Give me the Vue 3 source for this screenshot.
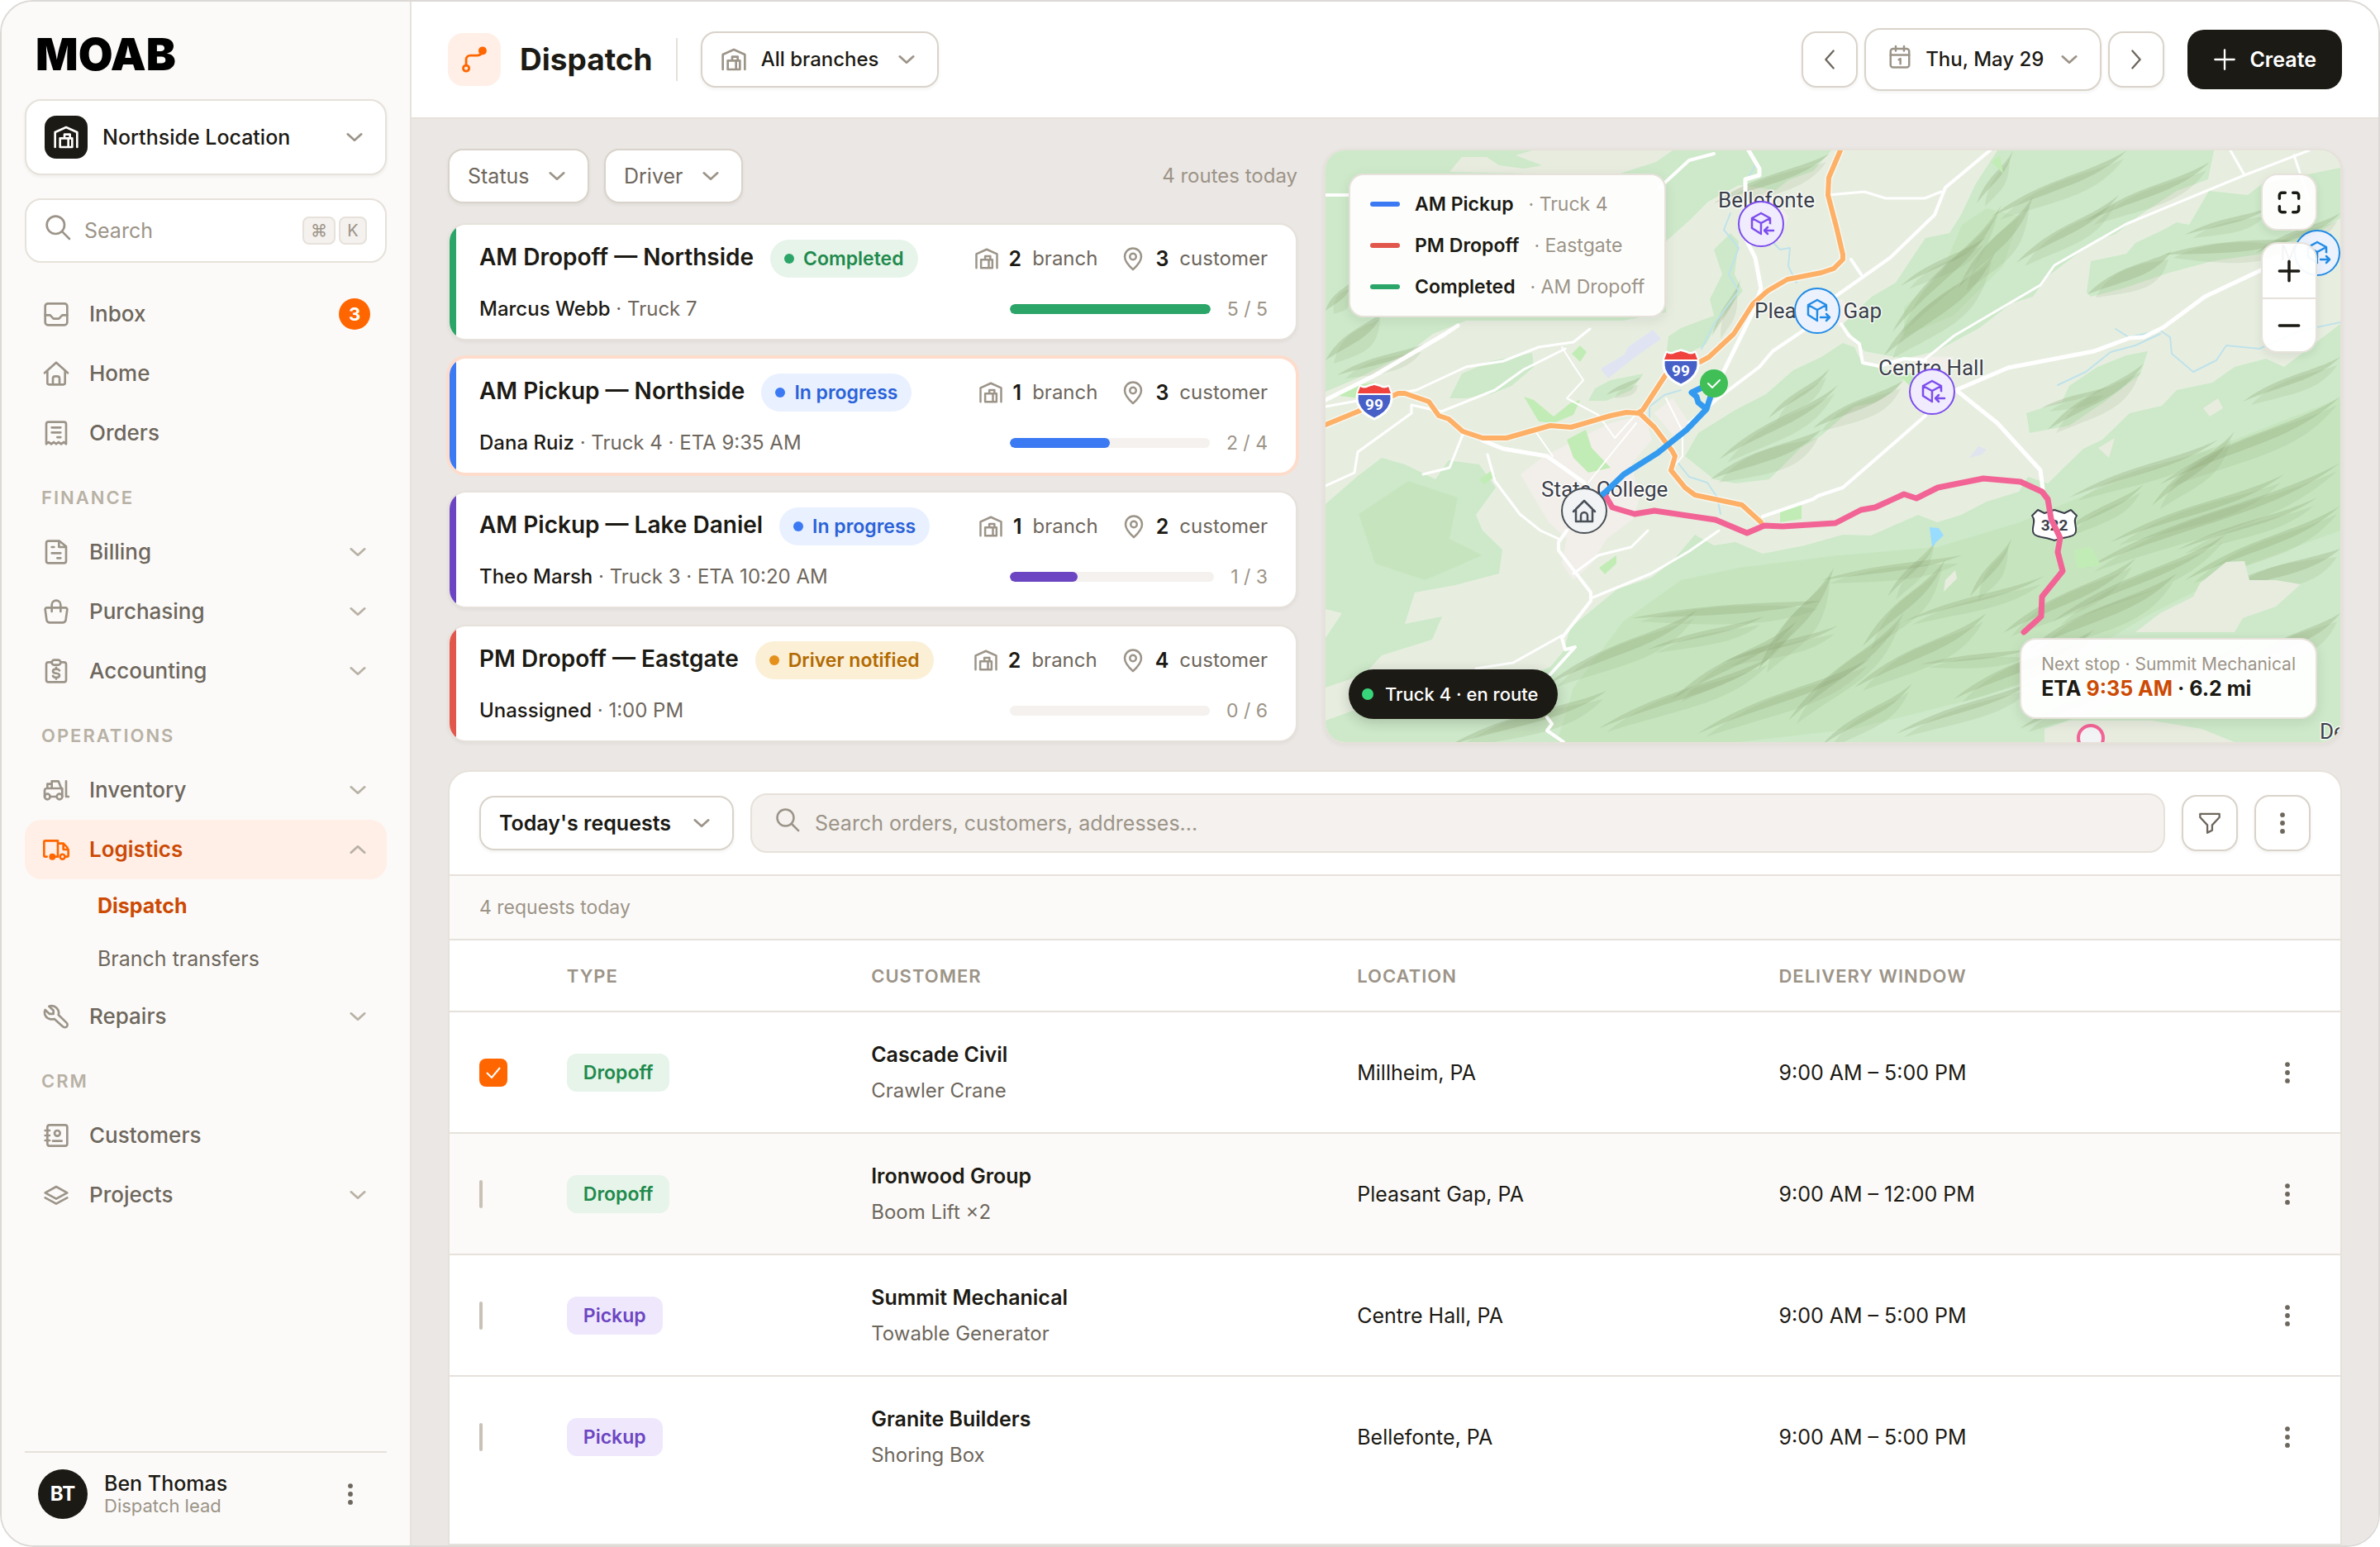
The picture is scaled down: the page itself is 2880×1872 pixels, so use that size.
<script setup>
import { ref } from 'vue'

const icons = {
  inbox: '<rect x="2" y="2.5" width="20" height="19.5" rx="2.5"/><path d="M2 13h4.5l3 3.2h5l3-3.2H22"/>',
  home: '<path d="M1.5 11.5 12 2l10.5 9.5M4 9.8v10.7A1.5 1.5 0 0 0 5.5 22h13a1.5 1.5 0 0 0 1.5-1.5V9.8M9 22v-5.5a2 2 0 0 1 2-2h2a2 2 0 0 1 2 2V22"/>',
  receipt: '<path d="M3 22V4a2 2 0 0 1 2-2h14a2 2 0 0 1 2 2v18l-2.2-1.8-2.300 1.800-2.300-1.800L12 22l-2.200-1.800L7.500 22l-2.300-1.800zM8 7h8M8 11.500h8M13 15.800h3"/>',
  billing: '<path d="M5 2h10l6 5v13a2 2 0 0 1-2 2H5a2 2 0 0 1-2-2V4a2 2 0 0 1 2-2zM14.500 2v5.500H21M8 7.500h2M8 13h8M13 17.500h3"/>',
  bag: '<path d="M3.500 8.500h17a1.500 1.500 0 0 1 1.500 1.700l-1.300 9.300a3 3 0 0 1-3 2.500H6.300a3 3 0 0 1-3-2.500L2 10.200a1.500 1.500 0 0 1 1.500-1.700zM8 12V6a4 4 0 0 1 8 0v6"/>',
  clipboard: '<path d="M8 4H5a2 2 0 0 0-2 2v14a2 2 0 0 0 2 2h14a2 2 0 0 0 2-2V6a2 2 0 0 0-2-2h-3"/><rect x="8" y="2" width="8" height="4.500" rx="2.250"/><path d="M15 11.500c-.5-.9-1.500-1.300-3-1.300-1.700 0-3 .6-3 1.900 0 3.200 6 .8 6 3.900 0 1.200-1.300 1.900-3 1.900-1.500 0-2.500-.5-3-1.400M12 8.900v1.300M12 17.900v1.300"/>',
  forklift: '<circle cx="4" cy="18" r="2.500"/><circle cx="15" cy="18" r="2.500"/><path d="M6.500 18h6M1.500 18v-5.500a2 2 0 0 1 2-2h14V18M4 10.500V6.500h4M8 10.500V4h6l3.500 8.500M21 4v14h3"/>',
  truck: '<path d="M3.500 18.500H2a1 1 0 0 1-1-1V5a1 1 0 0 1 1-1h11.500v14.500H12M13.500 6.500h5L22 10l1 3v4.500a1 1 0 0 1-1 1h-1M18.500 6.500V12H23"/><circle cx="8.500" cy="18.500" r="2" fill="currentColor"/><circle cx="17.700" cy="18.500" r="2.200"/>',
  wrench: '<path d="M5.500 2.800 9.500 6.500v3.200H6L2 6c-1.500 3.500.5 8 5 8.500 1.200.1 2.300 0 3.300-.3l7.700 6.900a2.400 2.400 0 0 0 3.600-3.200L14 10.500c1.500-4.500-3-9.500-8.500-7.700z"/>',
  contacts: '<rect x="4" y="2.500" width="18" height="19" rx="2"/><circle cx="13" cy="10" r="2.500"/><path d="M9 17h8M2 7.500h4M2 12h4M2 16.500h4"/>',
  layers: '<path d="M12 4.500 22 10l-10 5.500L2 10zM2 14.500l10 5.500 10-5.500"/>',
  branch: '<path d="M2 21V7.500L12 3l10 4.500V21M6.500 13h4V9.500h5V13h2v8h-11zM10.500 13h5M14 13v8"/>',
  pin: '<path d="M12 22.500c-5-4.500-8-8.500-8-12.500a8 8 0 0 1 16 0c0 4-3 8-8 12.500z"/><circle cx="12" cy="10" r="3"/>',
  calendar: '<rect x="3" y="4" width="18" height="18" rx="2.500"/><path d="M3 10h18M8 1.500V6M16 1.500V6M11 14.500l1.500-.8V18.500"/>',
  route: '<circle cx="5" cy="19.500" r="2.500"/><circle cx="19" cy="4.500" r="2.500" fill="currentColor"/><path d="M5 17v-5a3.500 3.500 0 0 1 3.500-3.500h6A4.500 4.500 0 0 0 18.500 6"/>',
  search: '<circle cx="10" cy="10" r="8"/><path d="m16 16 6.500 6.500"/>',
  down: '<path d="m3 8 9 8 9-8"/>',
  up: '<path d="m3 16 9-8 9 8"/>',
  left: '<path d="m16 3-8 9 8 9"/>',
  right: '<path d="m8 3 8 9-8 9"/>',
  plus: '<path d="M12 2v20M2 12h20"/>',
  minus: '<path d="M2 12h20"/>',
  filter: '<path d="M2 2.500h20v3.500l-7.500 8v5.500L9.500 22v-8L2 6z"/>',
  expand: '<path d="M2 8V4.500A2.500 2.500 0 0 1 4.500 2H8M16 2h3.500A2.500 2.500 0 0 1 22 4.500V8M22 16v3.500a2.500 2.500 0 0 1-2.500 2.500H16M8 22H4.500A2.500 2.500 0 0 1 2 19.500V16"/>',
  dots: '<g fill="currentColor" stroke="none"><circle cx="12" cy="3.500" r="2.500"/><circle cx="12" cy="12" r="2.500"/><circle cx="12" cy="20.500" r="2.500"/></g>',
}

const groups = [
  { items: [
    { icon: 'inbox', label: 'Inbox', count: 3 },
    { icon: 'home', label: 'Home' },
    { icon: 'receipt', label: 'Orders' },
  ] },
  { title: 'Finance', items: [
    { icon: 'billing', label: 'Billing', more: true },
    { icon: 'bag', label: 'Purchasing', more: true },
    { icon: 'clipboard', label: 'Accounting', more: true },
  ] },
  { title: 'Operations', items: [
    { icon: 'forklift', label: 'Inventory', more: true },
    { icon: 'truck', label: 'Logistics', more: true, open: true, children: ['Dispatch', 'Branch transfers'] },
    { icon: 'wrench', label: 'Repairs', more: true },
  ] },
  { title: 'CRM', items: [
    { icon: 'contacts', label: 'Customers' },
    { icon: 'layers', label: 'Projects', more: true },
  ] },
]

const routes = [
  { name: 'AM Dropoff — Northside', status: 'Completed', tone: 'green', color: '#2ba568', branches: 2, stops: 3, driver: 'Marcus Webb', meta: 'Truck 7', done: 5, total: 5 },
  { name: 'AM Pickup — Northside', status: 'In progress', tone: 'blue', color: '#3b7af2', branches: 1, stops: 3, driver: 'Dana Ruiz', meta: 'Truck 4 · ETA 9:35 AM', done: 2, total: 4, active: true },
  { name: 'AM Pickup — Lake Daniel', status: 'In progress', tone: 'blue', color: '#6c46c2', branches: 1, stops: 2, driver: 'Theo Marsh', meta: 'Truck 3 · ETA 10:20 AM', done: 1, total: 3 },
  { name: 'PM Dropoff — Eastgate', status: 'Driver notified', tone: 'amber', color: '#e2574c', branches: 2, stops: 4, driver: 'Unassigned', meta: '1:00 PM', done: 0, total: 6 },
]

const legend = [
  { name: 'AM Pickup', note: 'Truck 4', color: '#3b7af2' },
  { name: 'PM Dropoff', note: 'Eastgate', color: '#e2574c' },
  { name: 'Completed', note: 'AM Dropoff', color: '#2ba568' },
]

const requests = ref([
  { type: 'Dropoff', customer: 'Cascade Civil', item: 'Crawler Crane', place: 'Millheim, PA', time: '9:00 AM – 5:00 PM', picked: true },
  { type: 'Dropoff', customer: 'Ironwood Group', item: 'Boom Lift ×2', place: 'Pleasant Gap, PA', time: '9:00 AM – 12:00 PM', picked: false },
  { type: 'Pickup', customer: 'Summit Mechanical', item: 'Towable Generator', place: 'Centre Hall, PA', time: '9:00 AM – 5:00 PM', picked: false },
  { type: 'Pickup', customer: 'Granite Builders', item: 'Shoring Box', place: 'Bellefonte, PA', time: '9:00 AM – 5:00 PM', picked: false },
])

const forests = [
  'M0 0H540L505 30 470 55 440 85 412 110V196L360 206H170L130 222 100 245 40 275 0 292Z',
  'M150 300 165 270 200 255 250 245 252 262 225 285 200 295 170 300Z',
  'M318 303 326 288 345 278 385 270 370 290 340 303Z',
  'M411 258 415 225 430 215 470 200 465 180 480 150 470 120 490 100 500 110 495 150 505 170 480 200 460 235 430 250Z',
  'M463 62 480 30 510 0 612 0 590 25 560 36 545 48 500 42Z',
  'M39 394 68 372 96 380 133 398 149 375 186 380 206 408 182 441 190 460 214 483 210 512 157 526 108 535 96 573 141 564 129 592 68 611 47 634 0 650V590L20 560 0 555V428Z',
  'M0 716V690L60 668 150 655 215 649 272 625 288 606 296 578 325 554 353 531 394 517 419 498 447 465 470 478 496 474 529 488 580 478 626 465 660 466 717 441 740 450 769 441 800 425 839 413 850 395 874 403 917 361 940 350 973 318 1012 309 1030 290 1073 281 1100 262 1138 252 1160 262 1228 210V716Z',
  'M435 370 451 342 496 314 533 295 566 266 600 250 626 233 640 238 648 255 700 275 690 290 665 305 640 310 600 345 575 360 537 398 496 403 470 398Z',
  'M661 177 690 160 713 125 726 106 755 100 769 78 787 40 813 0H1075L1068 35 1030 49 986 78 956 101 930 110 873 153 856 177 830 185 791 215 739 243 700 252 652 243 626 210Z',
  'M921 172 926 134 969 125 980 112 1012 97 1030 87 1045 90 1069 49 1116 54 1134 40 1228 21V82L1199 101 1134 125 1073 134 1021 148 965 167 926 177Z',
  'M852 342 848 318 891 304 900 285 934 262 969 248 995 243 986 271 943 304 900 333Z',
  'M0 120 30 140 20 160 30 200 0 230Z',
]
const clearings = [
  'M980 583 1010 560 1050 540 1058 524 1090 498 1112 497 1118 520 1150 520 1180 525 1150 552 1110 566 1100 583Z',
  'M150 26 165 8 195 8 210 18 240 22 262 18 230 6 250 0H420L400 14 350 30Z',
  'M870 700 900 690 1000 690 1060 700 1100 716H870Z',
  'M935 360 955 348 948 372Z', 'M750 520 762 508 764 518 748 534Z', 'M1062 312 1080 300 1086 312 1070 322Z',
]
const deepForest = [
  'M300 650 360 570 430 520 500 505 620 490 740 480 840 450 960 400 1100 350 1228 300V460L1120 500 1000 560 900 620 800 660 640 700 500 716H280Z',
  'M700 190 745 150 770 90 800 70 840 80 820 140 760 200 700 225Z',
  'M40 440 100 400 160 420 150 470 190 490 120 520 60 500Z',
]
const parks = ['M292 350 315 338 322 360 345 384 318 390 300 372Z', 'M331 505 352 490 352 500 338 513Z', 'M298 246 308 236 316 244 308 256Z', 'M550 434 576 428 576 446 550 450Z', 'M906 484 926 480 938 502 910 506Z', 'M806 14 816 6 820 28Z', 'M240 298 252 302 276 322 296 306 308 302 300 320 276 330 258 328Z', 'M186 398 200 388 206 394 192 404Z', 'M10 296 30 286 60 280 40 300Z', 'M696 274 712 268 718 288 706 284Z']
const towns = ['M236 392 262 372 300 352 345 330 385 320 395 350 370 380 380 420 372 446 340 470 322 500 300 520 286 500 292 470 270 450Z', 'M510 60 535 50 560 80 550 110 520 100Z', 'M596 190 625 180 640 200 622 214Z', 'M710 250 760 250 756 275 726 275Z', 'M398 318 420 300 440 330 425 350Z']
const roads = [
  { w: 5, d: 'M0 302 60 272 145 222 160 212' },
  { w: 3, d: 'M0 310 110 290 170 262 215 255 258 238 300 232 320 216' },
  { w: 5, d: 'M190 351 215 361 268 370 313 402' },
  { w: 5, d: 'M512 0 525 22 525 30 508 35V106L520 130 527 167 517 196 480 271' },
  { w: 4, d: 'M590 210 541 243 525 262 476 299 440 330' },
  { w: 4, d: 'M404 45 440 12 470 4' },
  { w: 4, d: 'M618 176 683 130 737 78 750 45 804 0' },
  { w: 3, d: 'M608 54 652 50 678 58 725 58 745 50' },
  { w: 3, d: 'M726 252 761 224 865 163 882 139 969 89 1112 30 1190 0M1095 0 1112 30M1172 6 1190 60' },
  { w: 5, d: 'M1134 144 1064 177 1014 214 990 226 973 227 930 243 826 263 763 290 813 330 865 387 868 410' },
  { w: 4, d: 'M726 321 626 408 596 418 590 422 529 443' },
  { w: 4, d: 'M624 210 633 224 646 234 650 257 670 261 700 252 726 254' },
  { w: 4, d: 'M292 460 282 474V484L321 535V545L286 590 290 604 302 601 272 634M268 686 274 694 268 702 288 716' },
  { w: 3, d: 'M321 542 394 512 440 485 476 460M286 587 227 620 182 627M300 512 330 490 370 480 390 460' },
  { w: 3, d: 'M0 406 35 390 39 365 104 318 104 308 140 316 180 300 205 290 240 265 290 240' },
  { w: 3, d: 'M118 392 150 384 166 344M196 368 205 400 235 440 260 460 282 470' },
  { w: 2, d: 'M286 238 300 260 312 278 292 300 330 320 350 348 375 320M318 402 350 362 376 330' },
  { w: 2, d: 'M254 340 275 370M412 300 432 340V370L424 380' },
  { w: 4, d: 'M0 54H30M636 132 648 150' },
]
const creeks = 'M520 18 508 40M490 76 482 96 500 118 488 150 500 170 470 210 455 240M540 110 550 120 562 118 560 140 570 160M392 330V310L410 296 430 290M420 370 440 395 462 402 474 420 478 440M956 216 972 226 1010 218 1022 226 1024 246 1050 268 1078 254 1090 236 1130 240 1180 218 1228 208M886 284 920 268 950 244 980 236 1010 222'

/* Each ridge is a thin bent lens: start point, end point, thickness. */
const ridgeSeeds = [
  [270, 645, 450, 556, 14], [370, 566, 600, 545, 14], [330, 700, 540, 612, 12], [420, 664, 570, 570, 12], [450, 706, 660, 614, 12],
  [524, 628, 615, 505, 18], [560, 690, 700, 560, 14], [600, 520, 770, 490, 10], [640, 650, 800, 560, 14], [650, 600, 750, 495, 14],
  [690, 706, 860, 640, 10], [760, 664, 930, 580, 14], [700, 570, 870, 515, 8], [820, 584, 980, 494, 14], [780, 540, 830, 470, 10],
  [850, 604, 1030, 512, 16], [880, 570, 1090, 464, 12], [920, 506, 1228, 378, 14], [950, 474, 1160, 392, 12], [1000, 430, 1100, 340, 12],
  [1010, 404, 1228, 298, 14], [1080, 534, 1228, 482, 16], [1040, 520, 1228, 430, 12], [900, 420, 1080, 350, 10], [890, 464, 990, 404, 8],
  [1110, 304, 1228, 250, 10], [950, 664, 1120, 594, 10], [1110, 624, 1228, 560, 14], [150, 720, 340, 654, 14], [600, 720, 710, 645, 10],
  [676, 248, 810, 124, 20], [686, 220, 818, 66, 14], [766, 166, 856, 56, 16], [806, 80, 970, 0, 12], [836, 136, 960, 54, 12],
  [920, 86, 1070, 14, 12], [788, 64, 832, 0, 8], [696, 164, 800, 104, 8], [922, 174, 1024, 122, 16], [1016, 126, 1170, 108, 16],
  [1126, 124, 1228, 76, 10], [1040, 102, 1140, 70, 8], [874, 338, 990, 258, 14], [866, 312, 946, 286, 6], [466, 398, 600, 338, 16],
  [476, 374, 620, 284, 12], [590, 336, 700, 278, 12], [536, 324, 610, 264, 8], [0, 254, 70, 194, 14], [14, 272, 120, 234, 10],
  [470, 64, 610, 4, 12], [468, 224, 502, 156, 8], [0, 194, 32, 158, 10], [340, 296, 382, 274, 6],
  [720, 622, 850, 604, 8], [390, 604, 530, 564, 8], [840, 700, 980, 634, 10], [1030, 484, 1200, 420, 8], [680, 540, 740, 470, 8], [480, 620, 620, 575, 8],
]
const lens = (x1, y1, x2, y2, t) => {
  const ax = x1 + (x2 - x1) * 0.4
  const ay = y1 + (y2 - y1) * 0.5
  const bx = x1 + (x2 - x1) * 0.7
  const by = y1 + (y2 - y1) * 0.55
  return `M${x1} ${y1}C${ax - t / 2} ${ay - t / 2} ${bx} ${by - t / 2} ${x2} ${y2}C${bx + t / 2} ${by + t / 2} ${ax + t / 2} ${ay + t / 2} ${x1} ${y1}Z`
}
const ridges = ridgeSeeds.flatMap(([x1, y1, x2, y2, t]) => [
  { d: lens(x1, y1, x2, y2, t), o: 0.3 },
  { d: lens(x1 + 10, y1 + 4, x2 - 4, y2 + 10, t * 2), o: 0.16 },
])

const highway = 'M0 332 39 316 88 294H96L125 304 137 321 149 325 166 340 190 348H219L272 333 297 335 345 321 364 317 380 318M378 318 384 314 412 271 453 256 464 250 494 222 517 186 535 170 559 156 600 148 615 143 626 132V126L618 92 608 54 609 33 623 0M380 318 398 335 419 363 423 370 418 387 435 408 447 417 504 429 527 450'
const pinkRoute = 'M337 415 347 432 374 440 398 436 472 447 510 463 531 454 553 455 617 451 648 435 665 432 700 416 715 421 741 408 796 397 841 401 867 413 874 422 878 446 889 469 886 486 892 509 867 540 866 564 845 583'
const blueRoute = 'M313 435 337 415 361 392 402 366 437 338 461 313 470 285M461 313 451 305 449 298 443 293 466 282'
const box = 'M0-13 11-7V3M-11-7 0-13M-11-7V5L0 12V-1L-11-7M0-1 11-7'
const pins = [
  { x: 527, y: 89, kind: 'in', color: '#7c4dee', fill: '#f0ebfd' },
  { x: 595, y: 194, kind: 'out', color: '#228be6', fill: '#ebf2fd' },
  { x: 734, y: 292, kind: 'in', color: '#7c4dee', fill: '#f0ebfd' },
  { x: 1200, y: 124, kind: 'out', color: '#228be6', fill: '#ebf2fd' },
]
const places = [
  { x: 475, y: 69, name: 'Bellefonte' }, { x: 519, y: 203, name: 'Pleasant Gap' },
  { x: 669, y: 272, name: 'Centre Hall' }, { x: 261, y: 419, name: 'State College' },
  { x: 1155, y: 133, name: 'M' }, { x: 1203, y: 712, name: 'De' },
]
</script>

<template>
  <div class="shell">
    <aside class="sidebar">
      <div class="logo">MOAB</div>
      <button class="site">
        <span class="site-icon"><svg viewBox="0 0 24 24" v-html="icons.branch"></svg></span>
        <span class="grow">Northside Location</span>
        <svg class="chev" viewBox="0 0 24 24" v-html="icons.down"></svg>
      </button>
      <label class="quick">
        <svg viewBox="0 0 24 24" v-html="icons.search"></svg>
        <input type="search" placeholder="Search" aria-label="Search" />
        <kbd>⌘</kbd><kbd>K</kbd>
      </label>
      <nav>
        <div v-for="(g, i) in groups" :key="i">
          <h2 v-if="g.title">{{ g.title }}</h2>
          <template v-for="it in g.items" :key="it.label">
            <a href="#" class="nav-item" :class="{ current: it.open }">
              <svg class="nav-icon" viewBox="0 0 24 24" v-html="icons[it.icon]"></svg>
              <span class="grow">{{ it.label }}</span>
              <span v-if="it.count" class="count">{{ it.count }}</span>
              <svg v-if="it.more" class="chev" viewBox="0 0 24 24" v-html="it.open ? icons.up : icons.down"></svg>
            </a>
            <div v-if="it.children" class="sub">
              <a v-for="(c, n) in it.children" :key="c" href="#" :class="{ here: n === 0 }">{{ c }}</a>
            </div>
          </template>
        </div>
      </nav>
      <div class="user">
        <span class="avatar">BT</span>
        <div class="grow">
          <div class="user-name">Ben Thomas</div>
          <div class="user-role">Dispatch lead</div>
        </div>
        <button class="kebab" aria-label="Account menu"><svg viewBox="0 0 24 24" v-html="icons.dots"></svg></button>
      </div>
    </aside>

    <main>
      <header>
        <span class="title-icon"><svg viewBox="0 0 24 24" v-html="icons.route"></svg></span>
        <h1>Dispatch</h1>
        <span class="divider"></span>
        <div class="picker branches">
          <svg class="lead" viewBox="0 0 24 24" v-html="icons.branch"></svg>
          <select aria-label="Branch"><option>All branches</option></select>
          <svg class="chev" viewBox="0 0 24 24" v-html="icons.down"></svg>
        </div>
        <div class="grow"></div>
        <div class="dates">
          <button class="square" aria-label="Previous day"><svg viewBox="0 0 24 24" v-html="icons.left"></svg></button>
          <button class="date">
            <svg class="cal" viewBox="0 0 24 24" v-html="icons.calendar"></svg>
            Thu, May 29
            <svg class="chev" viewBox="0 0 24 24" v-html="icons.down"></svg>
          </button>
          <button class="square" aria-label="Next day"><svg viewBox="0 0 24 24" v-html="icons.right"></svg></button>
        </div>
        <button class="create"><svg viewBox="0 0 24 24" v-html="icons.plus"></svg>Create</button>
      </header>

      <div class="content">
        <div class="top">
          <section class="routes">
            <div class="filters">
              <div class="picker muted"><select aria-label="Status"><option>Status</option></select><svg class="chev" viewBox="0 0 24 24" v-html="icons.down"></svg></div>
              <div class="picker muted"><select aria-label="Driver"><option>Driver</option></select><svg class="chev" viewBox="0 0 24 24" v-html="icons.down"></svg></div>
              <span class="total">4 routes today</span>
            </div>
            <article v-for="r in routes" :key="r.name" class="route" :class="{ active: r.active }">
              <span class="accent" :style="{ background: r.color }"></span>
              <div class="route-row">
                <h3>{{ r.name }}</h3>
                <span class="status" :class="r.tone">{{ r.status }}</span>
                <span class="grow"></span>
                <span class="stat"><svg viewBox="0 0 24 24" v-html="icons.branch"></svg><b>{{ r.branches }}</b>branch</span>
                <span class="stat"><svg viewBox="0 0 24 24" v-html="icons.pin"></svg><b>{{ r.stops }}</b>customer</span>
              </div>
              <div class="route-row">
                <p class="grow"><b>{{ r.driver }}</b> · {{ r.meta }}</p>
                <div class="progress">
                  <div class="bar"><div :style="{ width: (r.done / r.total) * 100 + '%', background: r.color }"></div></div>
                  <span>{{ r.done }} / {{ r.total }}</span>
                </div>
              </div>
            </article>
          </section>

          <section class="map">
            <svg class="terrain" viewBox="0 0 1228 716" preserveAspectRatio="xMidYMid slice">
              <rect width="1228" height="716" fill="#e7eee0" />
              <path v-for="d in towns" :key="d" :d="d" fill="#f2efea" />
              <path v-for="d in forests" :key="d" :d="d" fill="#cde9c9" />
              <path v-for="d in deepForest" :key="d" :d="d" fill="#c6e5bf" />
              <path v-for="r in ridges" :key="r.d" :d="r.d" fill="#90a678" :fill-opacity="r.o" />
              <path v-for="d in clearings" :key="d" :d="d" fill="#e7ecdf" />
              <path v-for="d in parks" :key="d" :d="d" fill="#c2ecb5" />
              <path d="M333 264 362 247 366 238 396 217 406 228 372 252 342 276Z" fill="#e0e4f2" />
              <path d="M779 372 790 358 800 362 794 368Z" fill="#dfe4ef" />
              <path d="M731 456 742 457 748 466 740 473 734 480Z" fill="#98dcff" />
              <path :d="creeks" fill="none" stroke="#bfe2ea" stroke-width="2" />
              <path v-for="r in roads" :key="r.d" :d="r.d" fill="none" stroke="#fff" :stroke-width="r.w" stroke-linejoin="round" />
              <path :d="highway" fill="none" stroke="#fff" stroke-opacity=".6" stroke-width="9" stroke-linejoin="round" />
              <path :d="highway" fill="none" stroke="#fdb066" stroke-width="6" stroke-linejoin="round" />
              <g v-for="s in [[59, 304], [430, 263]]" :key="s[0]" :transform="`translate(${s[0]} ${s[1]})`">
                <path d="M-17-19Q-12-16-7-19L0-21 7-19Q12-16 17-19 23-8 20 2 16 14 0 21-16 14-20 2-23-8-17-19Z" fill="#4660c8" stroke="#fff" stroke-width="3" />
                <path d="M-17-18Q-12-15-7-18L0-20 7-18Q12-15 17-18L20-10H-20Z" fill="#f0433d" />
                <path d="M-20-9H20" stroke="#fff" stroke-width="2" />
                <text y="10" text-anchor="middle" class="shield-text" fill="#fff">99</text>
              </g>
              <g transform="translate(882 453)">
                <path d="M-20-18-12-14 0-18 12-14 20-18 27-11C22-4 27 0 26 8 25 16 12 14 0 19-12 14-25 16-26 8-27 0-22-4-27-11Z" fill="#fff" stroke="#3b3f4a" stroke-width="2" />
                <text y="7" text-anchor="middle" class="shield-text" fill="#3b3f4a">322</text>
              </g>
              <text v-for="p in places" :key="p.name" :x="p.x" :y="p.y" class="place">{{ p.name }}</text>
              <path :d="pinkRoute" fill="none" stroke="#f26495" stroke-width="7" stroke-linejoin="round" />
              <path :d="blueRoute" fill="none" stroke="#339af0" stroke-width="7" stroke-linejoin="round" />
              <circle cx="926" cy="711" r="15" fill="#f1f3f5" stroke="#f26495" stroke-width="4" />
              <g v-for="p in pins" :key="p.x" :transform="`translate(${p.x} ${p.y})`" fill="none" :stroke="p.color" stroke-linejoin="round" stroke-linecap="round">
                <circle r="27" :fill="p.fill" stroke-width="2" />
                <path :d="box" stroke-width="2.5" />
                <circle cx="10" cy="9" r="9" :fill="p.fill" stroke="none" />
                <path :d="p.kind === 'in' ? 'M15 8H4M8 4 4 8 8 12' : 'M4 8H15M11 4 15 8 11 12'" stroke-width="2.5" />
              </g>
              <g transform="translate(313 436)" fill="none" stroke="#495057" stroke-linejoin="round" stroke-linecap="round">
                <circle r="27" fill="#f1f3f5" stroke-width="2" />
                <path d="M-13 1 0-12 13 1M-10-2V13H10V-2M-4 13V6A4 4 0 0 1 4 6V13" stroke-width="2.5" />
              </g>
              <circle cx="470" cy="282" r="17" fill="#40bf57" />
              <path d="m463 282 5 5 9-9" fill="none" stroke="#fff" stroke-width="2" />
            </svg>
            <ul class="legend">
              <li v-for="l in legend" :key="l.name"><i :style="{ background: l.color }"></i><b>{{ l.name }}</b><span>· {{ l.note }}</span></li>
            </ul>
            <div class="controls">
              <div class="ctl"><button aria-label="Full screen"><svg viewBox="0 0 24 24" v-html="icons.expand"></svg></button></div>
              <div class="ctl">
                <button aria-label="Zoom in"><svg viewBox="0 0 24 24" v-html="icons.plus"></svg></button>
                <button aria-label="Zoom out"><svg viewBox="0 0 24 24" v-html="icons.minus"></svg></button>
              </div>
            </div>
            <div class="live">Truck 4 · en route</div>
            <div class="eta">
              <div class="eta-next">Next stop · Summit Mechanical</div>
              <div class="eta-time">ETA <em>9:35 AM</em> · 6.2 mi</div>
            </div>
          </section>
        </div>

        <section class="requests">
          <div class="toolbar">
            <div class="picker strong"><select aria-label="Request list"><option>Today's requests</option></select><svg class="chev" viewBox="0 0 24 24" v-html="icons.down"></svg></div>
            <label class="find">
              <svg viewBox="0 0 24 24" v-html="icons.search"></svg>
              <input type="search" placeholder="Search orders, customers, addresses..." aria-label="Search requests" />
            </label>
            <button class="square" aria-label="Filter"><svg viewBox="0 0 24 24" v-html="icons.filter"></svg></button>
            <button class="square" aria-label="More"><svg viewBox="0 0 24 24" v-html="icons.dots"></svg></button>
          </div>
          <div class="summary">4 requests today</div>
          <table>
            <colgroup><col class="c-check" /><col class="c-type" /><col class="c-customer" /><col class="c-place" /><col /></colgroup>
            <thead>
              <tr><th></th><th>Type</th><th>Customer</th><th>Location</th><th>Delivery window</th></tr>
            </thead>
            <tbody>
              <tr v-for="q in requests" :key="q.customer">
                <td class="pick"><input v-model="q.picked" type="checkbox" :aria-label="'Select ' + q.customer" /></td>
                <td><span class="tag" :class="q.type.toLowerCase()">{{ q.type }}</span></td>
                <td><div class="customer">{{ q.customer }}</div><div class="item">{{ q.item }}</div></td>
                <td>{{ q.place }}</td>
                <td>
                  <div class="last">{{ q.time }}<button class="kebab" :aria-label="'Actions for ' + q.customer"><svg viewBox="0 0 24 24" v-html="icons.dots"></svg></button></div>
                </td>
              </tr>
            </tbody>
          </table>
        </section>
      </div>
    </main>
  </div>
</template>

<style>
body { background: #fff; }
</style>

<style scoped>
* { box-sizing: border-box; }
h1, h2, h3, p, ul { margin: 0; padding: 0; }
button, input, select { font: inherit; color: inherit; margin: 0; }
button { display: flex; align-items: center; cursor: pointer; background: none; border: 0; padding: 0; text-align: left; }
a { color: inherit; text-decoration: none; }
svg { display: block; flex: none; fill: none; stroke: currentColor; stroke-width: 2; stroke-linecap: round; stroke-linejoin: round; }
.grow { flex: 1; min-width: 0; }

.shell {
  display: flex; min-height: 100vh; overflow: hidden;
  border: 2px solid #dcd9d6; border-radius: 40px;
  font-family: Inter, "Liberation Sans", sans-serif; font-size: 25px; line-height: 32px; color: #1c1a14;
}

.sidebar { width: 496px; flex: none; display: flex; flex-direction: column; padding: 40px 28px 32px; background: #fbfaf8; border-right: 2px solid #e6e2dc; }
.logo { font-size: 54px; font-weight: 900; line-height: 48px; padding-left: 13px; color: #000; }
.site { height: 92px; margin-top: 30px; padding: 0 26px 0 22px; gap: 18px; font-weight: 500; background: #fff; border: 2px solid #e6e1da; border-radius: 20px; box-shadow: 0 2px 4px rgba(28, 26, 20, .06); }
.site-icon { width: 52px; height: 52px; display: grid; place-items: center; border-radius: 14px; background: #1c1a14; color: #fff; }
.site-icon svg { width: 32px; height: 32px; }
.chev { width: 22px; height: 22px; stroke-width: 3; color: #9c9488; }
.quick { display: flex; align-items: center; height: 78px; margin-top: 28px; padding: 0 22px; background: #fff; border: 2px solid #e6e1da; border-radius: 20px; color: #9c9488; }
.quick svg { width: 32px; height: 32px; margin-bottom: 8px; }
.quick input { flex: 1; min-width: 0; border: 0; outline: 0; background: none; padding: 0 0 0 16px; }
input::placeholder { color: #9c9488; opacity: 1; }
kbd { height: 34px; min-width: 34px; padding: 0 8px; margin-left: 4px; border: 2px solid #e6e1da; border-radius: 8px; background: #f4f1ee; font: 20px/30px Inter, "DejaVu Sans", sans-serif; text-align: center; }
nav { margin-top: 26px; font-weight: 500; color: #6e675d; }
nav h2 { height: 72px; padding: 26px 20px 0; font-size: 22px; line-height: 32px; font-weight: 600; letter-spacing: 2px; text-transform: uppercase; color: #b8b1a5; }
.nav-item { display: flex; align-items: center; height: 72px; padding: 0 22px; border-radius: 20px; font-size: 26px; }
.nav-icon { width: 32px; height: 32px; margin-right: 24px; color: #9c9488; }
.nav-item .chev { margin-right: 2px; color: #b8b1a5; }
.count { width: 38px; height: 38px; margin-right: -2px; border-radius: 50%; background: #ff6600; color: #fff; font-size: 22px; line-height: 38px; font-weight: 700; text-align: center; }
.current { background: #ffefe7; color: #cc4a04; font-weight: 600; }
.current .nav-icon { color: #ff6600; }
.sub { padding-bottom: 2px; }
.sub a { display: flex; align-items: center; height: 64px; padding-left: 88px; font-weight: 400; }
.sub .here { color: #cc4a04; font-weight: 700; }
.user { display: flex; align-items: center; margin-top: auto; padding: 20px 30px 0 16px; border-top: 2px solid #e6e1da; }
.avatar { width: 60px; height: 60px; margin-right: 20px; border-radius: 50%; background: #1c1a14; color: #fff; font-size: 24px; line-height: 60px; font-weight: 700; text-align: center; }
.user-name { font-weight: 500; line-height: 28px; }
.user-role { font-size: 22px; line-height: 26px; color: #9c9488; }
.kebab { color: #6e675d; }
.kebab svg { width: 28px; height: 28px; }

main { flex: 1; min-width: 0; display: flex; flex-direction: column; background: #ebe7e4; }
header { display: flex; align-items: center; height: 142px; padding: 0 44px; background: #fff; border-bottom: 2px solid #e6e1da; }
.title-icon { width: 64px; height: 64px; display: grid; place-items: center; border-radius: 18px; background: #ffefe7; color: #ff6600; }
.title-icon svg { width: 34px; height: 34px; }
h1 { margin-left: 23px; font-size: 37px; line-height: 48px; font-weight: 700; }
.divider { width: 2px; height: 52px; margin: 0 28px; background: #e6e1da; }
.picker { position: relative; height: 66px; background: #fff; border: 2px solid #d9d3ca; border-radius: 18px; box-shadow: 0 2px 4px rgba(28, 26, 20, .06); }
.picker select { height: 100%; padding: 0 70px 0 22px; border: 0; outline: 0; background: none; appearance: none; border-radius: 16px; }
.picker .chev, .picker .lead { position: absolute; top: 50%; translate: 0 -50%; pointer-events: none; }
.picker .chev { right: 26px; }
.picker .lead { left: 22px; width: 32px; height: 32px; color: #9c9488; }
.branches { height: 68px; font-size: 24px; font-weight: 500; }
.branches select { padding-left: 71px; }
.muted { color: #6e675d; }
.strong { font-weight: 600; }
.dates { display: flex; align-items: center; gap: 8px; }
.square { width: 68px; height: 68px; justify-content: center; background: #fff; border: 2px solid #d9d3ca; border-radius: 18px; color: #6e675d; box-shadow: 0 2px 4px rgba(28, 26, 20, .06); }
.square svg { width: 28px; height: 28px; }
.date { height: 76px; padding: 0 26px; gap: 20px; background: #fff; border: 2px solid #d9d3ca; border-radius: 20px; font-size: 24px; font-weight: 500; box-shadow: 0 2px 4px rgba(28, 26, 20, .06); }
.cal { width: 30px; height: 30px; margin-right: -4px; margin-bottom: 6px; color: #9c9488; }
.create { height: 72px; margin-left: 28px; padding: 0 31px; gap: 16px; border-radius: 20px; background: #1c1a14; color: #fff; font-weight: 600; }
.create svg { width: 28px; height: 28px; }

.content { flex: 1; display: flex; flex-direction: column; gap: 32px; padding: 36px 44px 0; }
.top { display: grid; grid-template-columns: minmax(0, 1028fr) minmax(0, 1232fr); gap: 32px; }
.routes { display: flex; flex-direction: column; gap: 20px; padding-bottom: 2px; }
.filters { display: flex; align-items: center; gap: 18px; height: 70px; padding-bottom: 4px; }
.total { margin-left: auto; font-size: 24px; color: #9c9488; }
.route { position: relative; overflow: hidden; height: 142px; display: flex; flex-direction: column; gap: 22px; padding: 18px 34px 0 36px; background: #fff; border: 2px solid #e6e1da; border-radius: 22px; box-shadow: 0 2px 4px rgba(28, 26, 20, .05); }
.active { border-color: #fddccb; box-shadow: 0 0 0 2px #fddccb; }
.accent { position: absolute; left: 0; top: 0; bottom: 0; width: 8px; }
.route-row { display: flex; align-items: center; }
.route-row:nth-child(2) { height: 46px; }
h3 { padding-bottom: 4px; font-size: 28px; line-height: 36px; font-weight: 600; white-space: nowrap; }
.status { display: flex; align-items: center; height: 46px; margin-left: 20px; padding: 0 17px; gap: 11px; border-radius: 23px; font-size: 23px; font-weight: 600; white-space: nowrap; }
.status::before { content: ""; width: 12px; height: 12px; border-radius: 50%; }
.green { background: #e6f4ea; color: #1f8a4c; }
.green::before { background: #2ba568; }
.blue { background: #e9f0ff; color: #2a62d8; }
.blue::before { background: #3b7af2; }
.amber { background: #fbefd6; color: #b26a00; }
.amber::before { background: #e5901a; }
.stat { display: flex; align-items: center; margin-left: 28px; font-size: 24px; color: #6e675d; }
.stat svg { width: 30px; height: 30px; color: #9c9488; }
.stat b { margin: 0 13px 0 12px; font-size: 25px; font-weight: 600; color: #1c1a14; }
.route p { font-size: 24px; line-height: 32px; color: #6e675d; }
.route p b { font-weight: 500; color: #1c1a14; }
.progress { width: 312px; display: flex; align-items: center; gap: 20px; font-size: 23px; color: #9c9488; white-space: nowrap; }
.bar { flex: 1; height: 12px; border-radius: 6px; background: #f4f1ee; overflow: hidden; }
.bar div { height: 100%; border-radius: 6px; }

.map { position: relative; overflow: hidden; min-height: 600px; border: 2px solid #e6e1da; border-radius: 26px; box-shadow: 0 2px 6px rgba(28, 26, 20, .06); background: #e7eee0; }
.terrain { position: absolute; inset: 0; width: 100%; height: 100%; stroke: none; }
.place { font-family: Roboto, sans-serif; font-size: 26px; fill: #3b3f4a; stroke: #fff; stroke-width: 3; stroke-opacity: .8; paint-order: stroke; }
.shield-text { font-family: Roboto, sans-serif; font-size: 19px; font-weight: 700; }
.legend { position: absolute; left: 28px; top: 28px; padding: 10px 24px; list-style: none; background: rgba(255, 255, 255, .95); border: 2px solid #e6e1da; border-radius: 18px; box-shadow: 0 4px 16px rgba(28, 26, 20, .08); font-size: 23px; }
.legend li { display: flex; align-items: center; height: 50px; }
.legend i { width: 36px; height: 6px; margin-right: 18px; border-radius: 3px; }
.legend b { margin-right: 18px; font-weight: 600; }
.legend span { color: #9c9488; }
.controls { position: absolute; right: 28px; top: 28px; display: grid; gap: 14px; }
.ctl { width: 68px; background: rgba(255, 255, 255, .95); border: 2px solid #e6e1da; border-radius: 20px; box-shadow: 0 4px 12px rgba(28, 26, 20, .08); }
.ctl button { width: 100%; height: 65px; justify-content: center; }
.ctl button + button { border-top: 2px solid #e6e1da; }
.ctl svg { width: 28px; height: 28px; stroke-width: 3; }
.live { position: absolute; left: 28px; bottom: 28px; height: 60px; display: flex; align-items: center; gap: 14px; padding: 0 24px 0 16px; border-radius: 30px; background: #1c1a14; color: #fff; font-size: 22px; font-weight: 500; box-shadow: 0 4px 16px rgba(28, 26, 20, .2); }
.live::before { content: ""; width: 14px; height: 14px; border-radius: 50%; background: #37d67a; }
.eta { position: absolute; right: 28px; bottom: 28px; padding: 16px 24px 20px; background: rgba(255, 255, 255, .96); border: 2px solid #e6e1da; border-radius: 20px; box-shadow: 0 4px 16px rgba(28, 26, 20, .1); white-space: nowrap; }
.eta-next { font-size: 21px; line-height: 28px; color: #9c9488; }
.eta-time { line-height: 30px; font-weight: 700; }
.eta em { font-style: normal; color: #cc4a04; }

.requests { flex: 1; overflow: hidden; background: #fff; border: 2px solid #e6e1da; border-radius: 26px 26px 0 0; }
.toolbar { display: flex; align-items: center; gap: 20px; height: 126px; padding: 0 36px; border-bottom: 2px solid #e6e1da; }
.strong select { padding-right: 74px; }
.find { flex: 1; display: flex; align-items: center; height: 72px; padding: 0 28px; gap: 18px; background: #f4f1ee; border: 2px solid #e6e1da; border-radius: 20px; color: #9c9488; }
.find svg { width: 30px; height: 30px; margin-bottom: 8px; }
.find input { flex: 1; min-width: 0; padding: 0; border: 0; outline: 0; background: none; }
.summary { height: 78px; padding: 0 36px; line-height: 76px; font-size: 23px; color: #9c9488; background: #fbfaf8; border-bottom: 2px solid #e6e1da; }
table { width: 100%; table-layout: fixed; border-collapse: collapse; }
.c-check { width: 6.2%; }
.c-type { width: 16.1%; }
.c-customer { width: 25.7%; }
.c-place { width: 22.3%; }
th { height: 86px; padding: 0; border-bottom: 2px solid #e6e1da; text-align: left; font-size: 22px; font-weight: 600; letter-spacing: 1px; text-transform: uppercase; color: #9c9488; }
td { height: 147px; padding: 0; }
tbody tr + tr td { border-top: 2px solid #e6e1da; }
tbody tr:nth-child(2) { background: #fbfaf8; }
.pick { padding-left: 36px; }
.pick input { display: block; width: 4px; height: 34px; appearance: none; border-radius: 2px; background: #c8c2b6; }
.pick input:checked { width: 34px; border-radius: 8px; background: #ff6600 url("data:image/svg+xml,%3Csvg xmlns='http://www.w3.org/2000/svg' viewBox='0 0 34 34'%3E%3Cpath d='m9 17 6 6 10-12' fill='none' stroke='white' stroke-width='2'/%3E%3C/svg%3E"); }
.tag { display: inline-block; height: 46px; padding: 0 20px; border-radius: 12px; font-size: 23px; line-height: 46px; font-weight: 600; }
.dropoff { background: #e6f4ea; color: #1f8a4c; }
.pickup { background: #efe8fd; color: #6c46c2; }
.customer { font-weight: 600; line-height: 44px; }
.item { font-size: 24px; line-height: 44px; color: #6e675d; }
.last { display: flex; align-items: center; justify-content: space-between; padding-right: 50px; }
</style>
